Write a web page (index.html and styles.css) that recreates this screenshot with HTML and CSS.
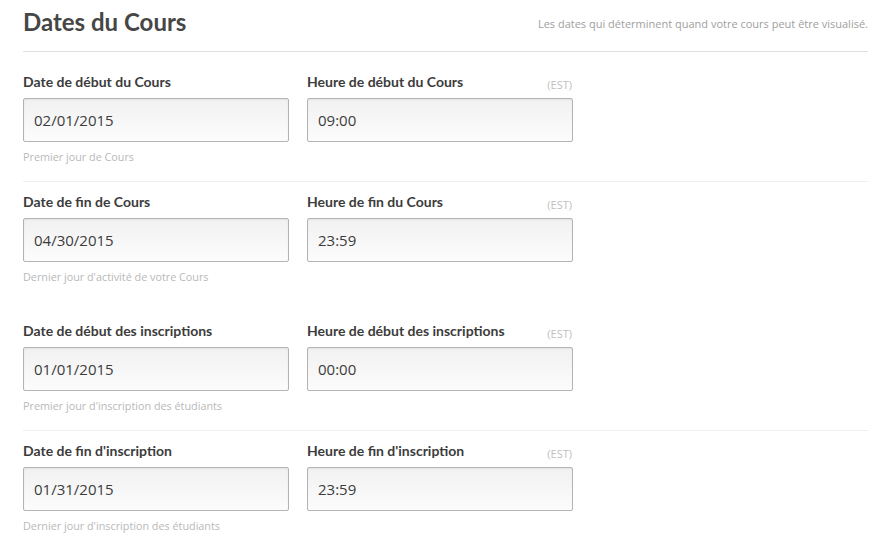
FILE: index.html
```html
<!DOCTYPE html>
<html lang="fr">
<head>
<meta charset="utf-8">
<title>Dates du Cours</title>
<link rel="stylesheet" href="styles.css">
</head>
<body>
<section class="section">
  <header class="section-header">
    <h2 class="section-title">Dates du Cours</h2>
    <span class="section-desc">Les dates qui déterminent quand votre cours peut être visualisé.</span>
  </header>

  <div class="group">
    <div class="row">
      <div class="field">
        <div class="field-head"><label class="field-label">Date de début du Cours</label></div>
        <input class="field-input" type="text" value="02/01/2015">
        <div class="field-tip">Premier jour de Cours</div>
      </div>
      <div class="field">
        <div class="field-head"><label class="field-label">Heure de début du Cours</label><span class="tz">(EST)</span></div>
        <input class="field-input" type="text" value="09:00">
      </div>
    </div>
    <div class="row">
      <div class="field">
        <div class="field-head"><label class="field-label">Date de fin de Cours</label></div>
        <input class="field-input" type="text" value="04/30/2015">
        <div class="field-tip">Dernier jour d'activité de votre Cours</div>
      </div>
      <div class="field">
        <div class="field-head"><label class="field-label">Heure de fin du Cours</label><span class="tz">(EST)</span></div>
        <input class="field-input" type="text" value="23:59">
      </div>
    </div>
  </div>

  <div class="group">
    <div class="row">
      <div class="field">
        <div class="field-head"><label class="field-label">Date de début des inscriptions</label></div>
        <input class="field-input" type="text" value="01/01/2015">
        <div class="field-tip">Premier jour d'inscription des étudiants</div>
      </div>
      <div class="field">
        <div class="field-head"><label class="field-label">Heure de début des inscriptions</label><span class="tz">(EST)</span></div>
        <input class="field-input" type="text" value="00:00">
      </div>
    </div>
    <div class="row">
      <div class="field">
        <div class="field-head"><label class="field-label">Date de fin d'inscription</label></div>
        <input class="field-input" type="text" value="01/31/2015">
        <div class="field-tip">Dernier jour d'inscription des étudiants</div>
      </div>
      <div class="field">
        <div class="field-head"><label class="field-label">Heure de fin d'inscription</label><span class="tz">(EST)</span></div>
        <input class="field-input" type="text" value="23:59">
      </div>
    </div>
  </div>
</section>
</body>
</html>
```

FILE: styles.css
```css
* { box-sizing: border-box; }

html, body {
  margin: 0;
  padding: 0;
  background: #ffffff;
  font-family: "Open Sans", "DejaVu Sans", sans-serif;
  color: #3c3c3c;
}

.section {
  width: 845px;
  margin-left: 23px;
}

.section-header {
  display: flex;
  justify-content: space-between;
  align-items: center;
  padding: 6px 0 13px;
  border-bottom: 1px solid #dfdfdf;
}

.section-title {
  margin: 0;
  font-family: "Lato", "Open Sans", sans-serif;
  font-size: 24px;
  line-height: 32px;
  font-weight: 700;
  color: #464646;
}

.section-desc {
  font-size: 11px;
  line-height: 16px;
  color: #a0a0a0;
  padding-top: 4px;
}

.group {
  margin-top: 10px;
}

.row {
  display: flex;
  gap: 18px;
  padding: 10px 0 16px;
}

.row + .row {
  border-top: 1px solid #efefef;
}

.field {
  width: 266px;
  display: flex;
  flex-direction: column;
}

.field-head {
  display: flex;
  justify-content: space-between;
  align-items: flex-end;
  margin-bottom: 6px;
}

.field-label {
  font-family: "Lato", "Open Sans", sans-serif;
  font-size: 14px;
  line-height: 20px;
  font-weight: 700;
  color: #3c3c3c;
}

.tz {
  font-size: 11px;
  line-height: 14px;
  color: #c0c0c0;
  padding-right: 1px;
}

.field-input {
  width: 266px;
  height: 44px;
  margin: 0;
  padding: 0 10px;
  font-family: "Open Sans", "DejaVu Sans", sans-serif;
  font-size: 15px;
  color: #3c3c3c;
  border: 1px solid #b4b4b4;
  border-radius: 2px;
  background: linear-gradient(to bottom, #f1f1f1, #fcfcfc);
  box-shadow: inset 0 1px 2px rgba(0, 0, 0, 0.06);
  outline: none;
}

.field-tip {
  margin-top: 7px;
  font-size: 10.8px;
  line-height: 16px;
  color: #b9b9b9;
}
```
